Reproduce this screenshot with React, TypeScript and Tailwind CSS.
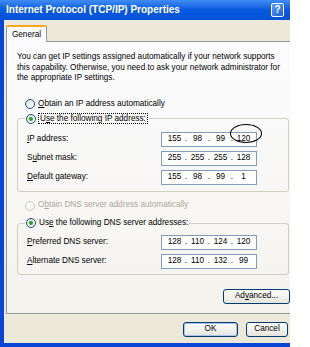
import type { ReactNode } from "react";

const FONT = { fontFamily: '"Liberation Sans", Arial, sans-serif' };

function Radio({ checked, disabled }: { checked?: boolean; disabled?: boolean }) {
  return (
    <span
      className={`w-[10px] h-[10px] shrink-0 rounded-full border flex items-center justify-center ${
        disabled
          ? "border-[#CAC8BB] bg-[#F8F7F3]"
          : "border-[#1C5180] bg-linear-to-br from-[#DCDCD7] to-white"
      }`}
    >
      {checked && <span className="w-[4px] h-[4px] rounded-full bg-[#21A121]" />}
    </span>
  );
}

function IpBox({ octets }: { octets: string[] }) {
  return (
    <div className="w-[96px] h-[15px] border border-[#7F9DB9] bg-white flex items-center pl-[2px]">
      {octets.map((o, i) => (
        <div key={i} className="flex items-center">
          {i > 0 && <span className="w-[2px] flex justify-center">.</span>}
          <span className="w-[21px] text-center">{o}</span>
        </div>
      ))}
    </div>
  );
}

function Row({ label, octets, children }: { label: ReactNode; octets: string[]; children?: ReactNode }) {
  return (
    <div className="flex items-center h-[15px] pl-[9px]">
      <span className="w-[134px]">{label}</span>
      <div className="relative">
        <IpBox octets={octets} />
        {children}
      </div>
    </div>
  );
}

function XpButton({ children, className = "", isDefault }: { children: ReactNode; className?: string; isDefault?: boolean }) {
  return (
    <div
      className={`h-[15px] shrink-0 rounded-[3px] border border-[#003C74] bg-linear-to-b from-white to-[#E6E4DA] flex items-center justify-center ${
        isDefault ? "shadow-[inset_0_0_0_1px_#A9C3F0]" : ""
      } ${className}`}
    >
      {children}
    </div>
  );
}

export default function App() {
  return (
    <div className="w-[310px] h-[347px] bg-white text-[8.2px] text-black leading-none" style={FONT}>
      <div className="w-[290px] h-[347px] overflow-hidden flex flex-col">
        {/* Title bar */}
        <div className="h-[20px] shrink-0 flex items-center justify-between pl-[6px] pr-[6px] bg-linear-to-b from-[#3F8CF3] via-[#0858E0] to-[#0653DA]">
          <span className="text-white font-bold text-[10px] whitespace-nowrap">
            Internet Protocol (TCP/IP) Properties
          </span>
          <div className="w-[13px] h-[14px] rounded-[2px] border border-white bg-linear-to-br from-[#5C9BFA] to-[#1F5FDC] flex items-center justify-center text-white font-bold text-[10px]">
            ?
          </div>
        </div>

        {/* Body */}
        <div className="flex-1 flex flex-col bg-[#ECE9D8] border-l-[4px] border-b-[4px] border-[#0A46D6]">
          {/* Tab */}
          <div className="mt-[5px] ml-[2px] w-[41px] h-[17px] -mb-[1px] relative z-10 bg-[#FCFCFE] border-x border-[#919B9C] border-t-[2px] border-t-[#F5A623] rounded-t-[2px] flex items-center justify-center pt-[1px]">
            General
          </div>

          {/* Panel */}
          <div className="ml-[2px] w-[300px] h-[273px] shrink-0 border border-[#919B9C] bg-linear-to-b from-[#FCFCFE] to-[#F4F3EE] pt-[10px] pl-[10px] flex flex-col">
            <p className="leading-[10.5px] whitespace-nowrap">
              You can get IP settings assigned automatically if your network supports
              <br />
              this capability. Otherwise, you need to ask your network administrator for
              <br />
              the appropriate IP settings.
            </p>

            <div className="mt-[14.5px] h-[12px] pl-[8px] flex items-center gap-[3px]">
              <Radio />
              <span>
                <u>O</u>btain an IP address automatically
              </span>
            </div>

            {/* IP group */}
            <div className="mt-[8px] w-[272px] border border-[#D0D0BF] rounded-[3px] pb-[6px] flex flex-col">
              <div className="-mt-[6.5px] h-[12px] ml-[7px] w-fit px-[1px] bg-[#FAFAF8] flex items-center gap-[2px]">
                <Radio checked />
                <span className="border border-dotted border-black px-[1px] leading-[9px]">
                  U<u>s</u>e the following IP address:
                </span>
              </div>
              <div className="mt-[7.5px] flex flex-col gap-[4px]">
                <Row label={<><u>I</u>P address:</>} octets={["155", "98", "99", "120"]}>
                  <div className="absolute left-[69px] -top-[8px] w-[32px] h-[19px] rounded-[50%] border border-black" />
                </Row>
                <Row label={<>S<u>u</u>bnet mask:</>} octets={["255", "255", "255", "128"]} />
                <Row label={<><u>D</u>efault gateway:</>} octets={["155", "98", "99", "1"]} />
              </div>
            </div>

            <div className="mt-[7.5px] h-[12px] pl-[8px] flex items-center gap-[3px] text-[#ACA899]">
              <Radio disabled />
              <span>
                O<u>b</u>tain DNS server address automatically
              </span>
            </div>

            {/* DNS group */}
            <div className="mt-[11.5px] w-[272px] border border-[#D0D0BF] rounded-[3px] pb-[5px] flex flex-col">
              <div className="-mt-[7px] h-[12px] ml-[7px] w-fit px-[1px] bg-[#F7F7F3] flex items-center gap-[3px]">
                <Radio checked />
                <span>
                  Us<u>e</u> the following DNS server addresses:
                </span>
              </div>
              <div className="mt-[6px] flex flex-col gap-[4px]">
                <Row label={<><u>P</u>referred DNS server:</>} octets={["128", "110", "124", "120"]} />
                <Row label={<><u>A</u>lternate DNS server:</>} octets={["128", "110", "132", "99"]} />
              </div>
            </div>

            <XpButton className="mt-[14px] ml-[206px] w-[67px]">
              Ad<u>v</u>anced...
            </XpButton>
          </div>

          {/* Dialog buttons */}
          <div className="mt-[8px] ml-[179px] flex gap-[8px]">
            <XpButton className="w-[55px]" isDefault>
              OK
            </XpButton>
            <XpButton className="w-[42px]">Cancel</XpButton>
          </div>
        </div>
      </div>
    </div>
  );
}
